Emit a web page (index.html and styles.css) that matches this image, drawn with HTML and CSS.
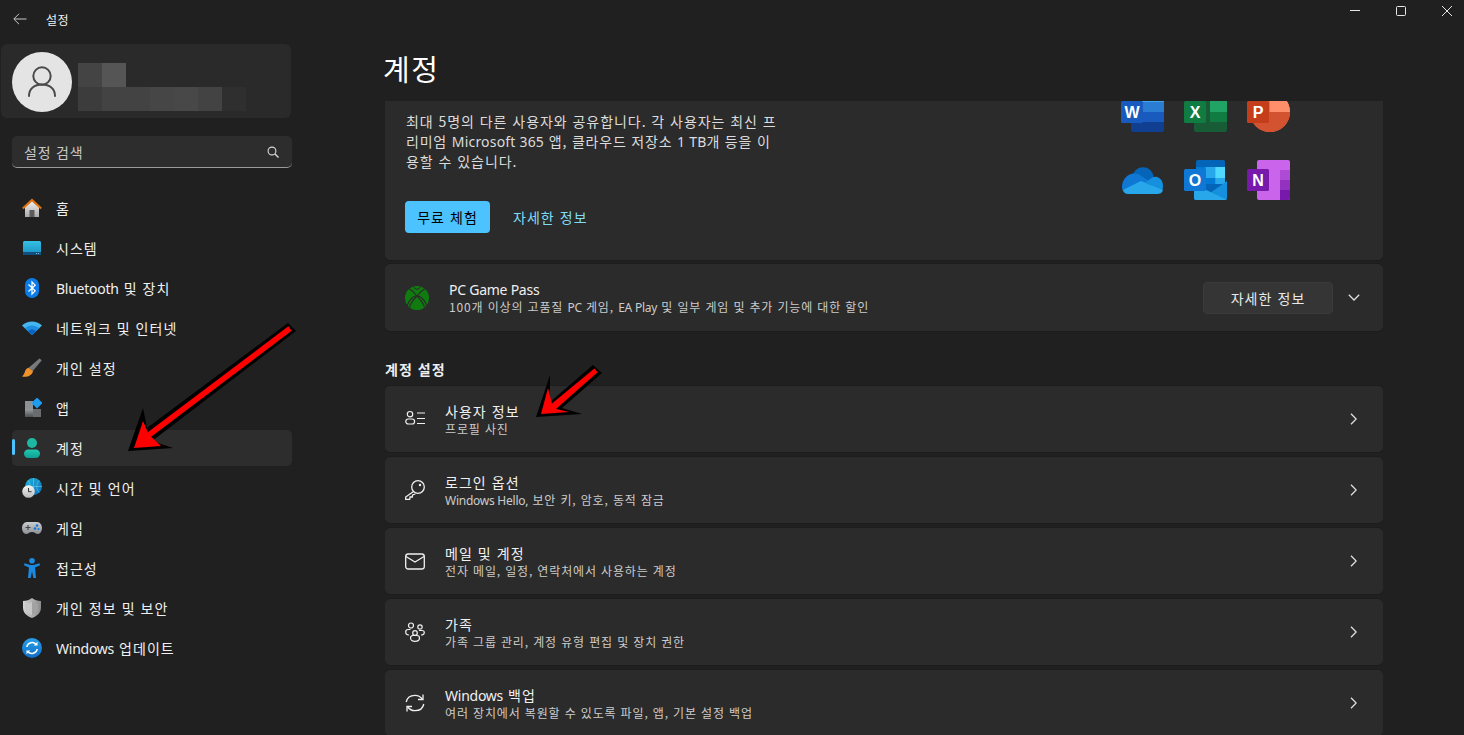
FILE: index.html
```html
<!DOCTYPE html>
<html lang="ko">
<head>
<meta charset="utf-8">
<title>설정</title>
<link rel="stylesheet" href="styles.css">
</head>
<body>
<div class="window">
  <svg width="0" height="0" class="defs">
    <defs>
      <linearGradient id="gHome" x1="0" y1="0" x2="0" y2="1"><stop offset="0" stop-color="#f2f2f2"/><stop offset="1" stop-color="#a8a8a8"/></linearGradient>
      <linearGradient id="gSys" x1="0" y1="0" x2="0" y2="1"><stop offset="0" stop-color="#35c1e4"/><stop offset="1" stop-color="#1a8fc4"/></linearGradient>
      <linearGradient id="gBrush" x1="0" y1="0" x2="1" y2="1"><stop offset="0" stop-color="#9a9a9a"/><stop offset="1" stop-color="#55585c"/></linearGradient>
      <linearGradient id="gAcc" x1="0" y1="0" x2="0" y2="1"><stop offset="0" stop-color="#1fc8b0"/><stop offset="1" stop-color="#0f9f95"/></linearGradient>
      <linearGradient id="gGlobe" x1="0" y1="0" x2="1" y2="1"><stop offset="0" stop-color="#1fb5d8"/><stop offset="1" stop-color="#0f6cbd"/></linearGradient>
      <linearGradient id="gClock" x1="0" y1="0" x2="0" y2="1"><stop offset="0" stop-color="#f5f5f5"/><stop offset="1" stop-color="#b9b9b9"/></linearGradient>
      <linearGradient id="gPad" x1="0" y1="0" x2="0" y2="1"><stop offset="0" stop-color="#c9ccd0"/><stop offset="1" stop-color="#8d9196"/></linearGradient>
      <linearGradient id="gShield" x1="0" y1="0" x2="1" y2="0"><stop offset="0" stop-color="#d5d5d5"/><stop offset="1" stop-color="#8b8b8b"/></linearGradient>
      <linearGradient id="gUpd" x1="0" y1="0" x2="0" y2="1"><stop offset="0" stop-color="#28a0e8"/><stop offset="1" stop-color="#0f6cc8"/></linearGradient>
      <linearGradient id="gStore" x1="0" y1="0" x2="0" y2="1"><stop offset="0" stop-color="#9a9ca0"/><stop offset="1" stop-color="#4e5054"/></linearGradient>
    </defs>
  </svg>

  <header class="titlebar">
    <svg class="back" width="14" height="12" viewBox="0 0 14 12"><path d="M13.500 6H1M6 .8 .8 6 6 11.200" fill="none" stroke="#c8c8c8" stroke-width="1"/></svg>
    <span class="app-title">설정</span>
    <div class="controls">
      <svg width="10" height="10" viewBox="0 0 10 10"><path d="M0 4.500h10" stroke="#e6e6e6" fill="none"/></svg>
      <svg width="10" height="10" viewBox="0 0 10 10"><rect x=".5" y=".5" width="9" height="9" rx="1" stroke="#e6e6e6" fill="none"/></svg>
      <svg width="10" height="10" viewBox="0 0 10 10"><path d="M0 0 10 10M10 0 0 10" stroke="#e6e6e6" fill="none"/></svg>
    </div>
  </header>

  <div class="layout">
    <aside class="sidebar">
      <div class="profile">
        <div class="avatar">
          <svg width="30" height="32" viewBox="0 0 30 32"><circle cx="15" cy="10" r="8.700" fill="none" stroke="#4a4a4a" stroke-width="2"/><path d="M2 30c0-7.500 5.500-11.500 13-11.500S28 22.500 28 30" fill="none" stroke="#4a4a4a" stroke-width="2" stroke-linecap="round"/></svg>
        </div>
        <div class="blur">
          <div class="blur-row"><i class="b1"></i><i class="b2"></i></div>
          <div class="blur-row"><i class="b3"></i><i class="b4"></i><i class="b4"></i><i class="b5"></i><i class="b6"></i><i class="b4"></i><i class="b7"></i></div>
        </div>
      </div>

      <div class="search">
        <span>설정 검색</span>
        <svg width="12" height="12" viewBox="0 0 12 12"><circle cx="5" cy="5" r="3.900" fill="none" stroke="#d8d8d8" stroke-width="1.100"/><path d="M8 8l3.500 3.500" stroke="#d8d8d8" stroke-width="1.400"/></svg>
      </div>

      <nav class="nav">
        <a class="nav-item">
          <svg class="nav-icon" viewBox="0 0 20 20"><path d="M3 9 10 3l7 6v10H3z" fill="url(#gHome)"/><rect x="7.500" y="12" width="5" height="7" fill="#5c5c5c"/><path d="M.8 10.500 10 2l9.200 8.500" fill="none" stroke="#e0720f" stroke-width="2.200"/></svg>
          <span class="nav-label">홈</span>
        </a>
        <a class="nav-item">
          <svg class="nav-icon" viewBox="0 0 20 20"><rect x="1" y="3" width="18" height="14" rx="1.500" fill="url(#gSys)"/><path d="M1 14h18v1.500A1.500 1.500 0 0 1 17.500 17h-15A1.500 1.500 0 0 1 1 15.500z" fill="#10507e"/><path d="M14 15.500h1M16 15.500h1" stroke="#9fd8f0" stroke-width=".8"/></svg>
          <span class="nav-label">시스템</span>
        </a>
        <a class="nav-item">
          <svg class="nav-icon" viewBox="0 0 20 20"><rect x="3" y="0" width="14" height="20" rx="7" fill="#0a7be8"/><path d="M6.500 6.500 13.200 12.800 10 16V4l3.200 3.200L6.500 13.500" fill="none" stroke="#fff" stroke-width="1.200"/></svg>
          <span class="nav-label"><span class="en">Bluetooth</span> 및 장치</span>
        </a>
        <a class="nav-item">
          <svg class="nav-icon" viewBox="0 0 20 20"><path d="M0 7.500C5.500 2 14.500 2 20 7.500L10 17z" fill="#45b6f0"/><path d="M3 10.300C7 6.500 13 6.500 17 10.300L10 17z" fill="#1d8fe0"/><path d="M6 13c2.300-2 5.700-2 8 0l-4 4z" fill="#0a62c4"/></svg>
          <span class="nav-label">네트워크 및 인터넷</span>
        </a>
        <a class="nav-item">
          <svg class="nav-icon" viewBox="0 0 20 20"><path d="M6.500 10 17.500 .5 19.800 2.300 10.500 13.500z" fill="url(#gBrush)"/><path d="M6.500 9.800C4 10.300 3.300 12.500 2.800 14S1.500 17 0 18.500c3.500.9 9.500.3 11-5.200z" fill="#f0922b"/></svg>
          <span class="nav-label">개인 설정</span>
        </a>
        <a class="nav-item">
          <svg class="nav-icon" viewBox="0 0 20 20"><rect x="3" y="3" width="8" height="8" fill="#8d9094"/><rect x="3" y="11" width="8" height="8" fill="url(#gStore)"/><rect x="11" y="11" width="8" height="8" fill="#6a6c70"/><rect x="11.100" y="1.100" width="7.800" height="7.800" transform="rotate(45 15 5)" fill="#1e9cf0"/></svg>
          <span class="nav-label">앱</span>
        </a>
        <a class="nav-item active">
          <svg class="nav-icon" viewBox="0 0 20 20"><circle cx="10" cy="5" r="5" fill="#1db8a2"/><rect x="2" y="11.500" width="16" height="8.500" rx="4.200" fill="url(#gAcc)"/></svg>
          <span class="nav-label">계정</span>
        </a>
        <a class="nav-item">
          <svg class="nav-icon" viewBox="0 0 20 20"><circle cx="11.500" cy="8.500" r="8.500" fill="url(#gGlobe)"/><path d="M3 8.500h17M11.500 0v17M6 2.500c3 4 3 8 0 12M17 2.500c-3 4-3 8 0 12" stroke="#62d0ea" stroke-width=".6" fill="none"/><circle cx="6.500" cy="13.500" r="6.300" fill="url(#gClock)"/><path d="M6.500 10v3.700h3" fill="none" stroke="#333" stroke-width="1"/></svg>
          <span class="nav-label">시간 및 언어</span>
        </a>
        <a class="nav-item">
          <svg class="nav-icon" viewBox="0 0 20 20"><path d="M5 4h10c3 0 5 3 5 6s-2 6-4 6c-2.500 0-3-2-6-2s-3.500 2-6 2c-2 0-4-3-4-6s2-6 5-6z" fill="url(#gPad)"/><path d="M3.500 9.500h5M6 7v5" stroke="#444" stroke-width="1.100"/><circle cx="15" cy="7.500" r="1.300" fill="#1273d4"/><circle cx="13" cy="10.500" r="1.300" fill="#1273d4"/><circle cx="16.500" cy="11" r="1" fill="#1273d4"/></svg>
          <span class="nav-label">게임</span>
        </a>
        <a class="nav-item">
          <svg class="nav-icon" viewBox="0 0 20 20"><circle cx="10" cy="2.800" r="2.800" fill="#1a8be0"/><path d="M2.500 5.200 2 7.200 7 9.500 6 20h2.600L10 13.500 11.400 20H14L13 9.500l5-2.300-.5-2L11.500 7h-3z" fill="#1a8be0"/></svg>
          <span class="nav-label">접근성</span>
        </a>
        <a class="nav-item">
          <svg class="nav-icon" viewBox="0 0 20 20"><path d="M10 0c2.500 2 5.500 3 9 3v6.500c0 5-3.500 8.500-9 10.500C4.500 18 1 14.500 1 9.500V3c3.500 0 6.500-1 9-3z" fill="url(#gShield)"/><path d="M10 4c1.800 1.200 3.800 1.800 6 2v4c0 3.500-2.300 5.500-6 7z" fill="#a2a2a2"/><path d="M10 4C8.200 5.200 6.200 5.800 4 6v4c0 3.500 2.300 5.500 6 7z" fill="#c8c8c8"/></svg>
          <span class="nav-label">개인 정보 및 보안</span>
        </a>
        <a class="nav-item">
          <svg class="nav-icon" viewBox="0 0 20 20"><circle cx="10" cy="10" r="10" fill="url(#gUpd)"/><path d="M4.800 9a5.300 5.300 0 0 1 9.400-2.500M15.200 11a5.300 5.300 0 0 1-9.400 2.500" fill="none" stroke="#fff" stroke-width="1.500"/><path d="M15.500 3.700v3.800h-3.800zM4.500 16.300v-3.800h3.800z" fill="#fff"/></svg>
          <span class="nav-label"><span class="en">Windows</span> 업데이트</span>
        </a>
      </nav>
    </aside>

    <main class="main">
      <h1 class="page-title">계정</h1>
      <div class="scroller">
        <section class="card promo">
          <div class="promo-text">
            <div class="promo-line">최대 5명의 다른 사용자와 공유합니다. 각 사용자는 최신 프</div>
            <div class="promo-line tight">리미엄 <span class="en">Microsoft 365</span> 앱, 클라우드 저장소 <span class="en">1 TB</span>개 등을 이</div>
            <div class="promo-line">용할 수 있습니다.</div>
            <div class="promo-actions">
              <button class="primary">무료 체험</button>
              <span class="link">자세한 정보</span>
            </div>
          </div>
          <div class="office">
            <svg viewBox="0 0 43 40"><path d="M10 2a2 2 0 0 1 2-2h29a2 2 0 0 1 2 2v8H10z" fill="#41a5ee"/><rect x="10" y="10" width="33" height="10" fill="#2b7cd3"/><rect x="10" y="20" width="33" height="10" fill="#185abd"/><path d="M10 30h33v8a2 2 0 0 1-2 2H12a2 2 0 0 1-2-2z" fill="#103f91"/><rect x="0" y="9" width="22" height="22" rx="1.500" fill="#185abd"/><text x="11" y="26" class="ol">W</text></svg>
            <svg viewBox="0 0 43 40"><path d="M10 2a2 2 0 0 1 2-2h29a2 2 0 0 1 2 2v8H10z" fill="#21a366"/><rect x="10" y="10" width="33" height="10" fill="#21a366"/><rect x="26" y="20" width="17" height="10" fill="#107c41"/><path d="M10 30h33v8a2 2 0 0 1-2 2H12a2 2 0 0 1-2-2z" fill="#185c37"/><rect x="10" y="9" width="16" height="21" fill="#185c37"/><rect x="0" y="9" width="22" height="22" rx="1.500" fill="#107c41"/><text x="11" y="26" class="ol">X</text></svg>
            <svg viewBox="0 0 43 40"><circle cx="23" cy="20" r="20" fill="#ed6c47"/><path d="M23 0a20 20 0 0 1 20 20H23z" fill="#ff8f6b"/><path d="M3 20a20 20 0 0 0 40 0z" fill="#d35230"/><rect x="0" y="9" width="22" height="22" rx="1.500" fill="#c43e1c"/><text x="11" y="26" class="ol">P</text></svg>
            <svg viewBox="0 0 43 40"><path d="M11 20C11 12 16 7.300 22 7.300S33 12 33 20l-6 2H12z" fill="#0364b8"/><path d="M1 27c0-7 5-13.500 12-13.500 3 0 6 1.200 8 3L30 22 8 34c-4.500 0-7-3-7-7z" fill="#0f78d4"/><path d="M28 20c3-3 6-3.500 8-3 3.500 1 6 4 6 9 0 2-.5 4-1.500 5.500L24 22z" fill="#1490df"/><path d="M2 30 20 21 42 30C41 33 39 34 36 34H8C5 34 3 33 2 30z" fill="#28a8ea"/></svg>
            <svg viewBox="0 0 43 40"><path d="M12 2a2 2 0 0 1 2-2h25a2 2 0 0 1 2 2v30H12z" fill="#0364b8"/><rect x="12" y="7" width="9.500" height="11" fill="#0078d4"/><rect x="21.500" y="7" width="9.700" height="11" fill="#28a8ea"/><rect x="31.200" y="7" width="9.800" height="11" fill="#50d9ff"/><rect x="21.500" y="18" width="9.700" height="6" fill="#0078d4"/><rect x="31.200" y="18" width="9.800" height="6" fill="#28a8ea"/><path d="M10 24 26 33 43 21v17a2 2 0 0 1-2 2H12a2 2 0 0 1-2-2z" fill="#1490df"/><path d="M10 24l33 16H12a2 2 0 0 1-2-2z" fill="#28a8ea"/><rect x="0" y="9" width="22" height="22" rx="1.500" fill="#0f78d4"/><text x="11" y="26" class="ol">O</text></svg>
            <svg viewBox="0 0 43 40"><rect x="10" y="0" width="33" height="40" rx="2" fill="#ca64ea"/><rect x="33" y="10" width="10" height="10" fill="#ae4bd5"/><rect x="33" y="20" width="10" height="10" fill="#9332bf"/><path d="M33 30h10v8a2 2 0 0 1-2 2h-8z" fill="#7719aa"/><rect x="0" y="9" width="22" height="22" rx="1.500" fill="#7719aa"/><text x="11" y="26" class="ol">N</text></svg>
          </div>
        </section>

        <section class="card pass">
          <svg class="xbox" viewBox="0 0 24 24"><circle cx="12" cy="12" r="12" fill="#107c10"/><path d="M4 2.500C8 5 12 10 12 10s4-5 8-7.500M2.200 19.500C4 14 9 9.500 12 10c3-.5 8 4 9.800 9.500M12 10c-2 2-6 6-7.500 11M12 10c2 2 6 6 7.500 11" fill="none" stroke="#2b2b2b" stroke-width="1.200"/><path d="M8.500 1.500 12 3.500l3.500-2" fill="none" stroke="#2b2b2b" stroke-width="1"/><path d="M12 13.500c-3 2.800-5 5.800-5.700 8.500 3.500 2.500 8 2.500 11.400 0-.7-2.700-2.700-5.700-5.700-8.500z" fill="#107c10"/></svg>
          <div class="pass-text">
            <div class="row-title"><span class="en">PC Game Pass</span></div>
            <div class="row-sub">100개 이상의 고품질 <span class="en">PC</span> 게임, <span class="en">EA Play</span> 및 일부 게임 및 추가 기능에 대한 할인</div>
          </div>
          <button class="secondary">자세한 정보</button>
          <svg class="chev-down" width="12" height="7" viewBox="0 0 12 7"><path d="M.8.8 6 6l5.200-5.200" fill="none" stroke="#e0e0e0" stroke-width="1.300"/></svg>
        </section>

        <h2 class="section">계정 설정</h2>

        <div class="rows">
          <a class="card row">
            <svg class="row-icon" viewBox="0 0 20 20"><circle cx="5" cy="5.200" r="2.700" fill="none" stroke="#f0f0f0" stroke-width="1.200"/><rect x=".8" y="10" width="8.800" height="5" rx="2.500" fill="none" stroke="#f0f0f0" stroke-width="1.200"/><path d="M12 4h8M12 9.500h8M12 14.500h8" stroke="#f0f0f0" stroke-width="1.200"/></svg>
            <div class="row-text"><div class="row-title">사용자 정보</div><div class="row-sub">프로필 사진</div></div>
            <svg class="chev" width="7" height="12" viewBox="0 0 7 12"><path d="M1 .8 6.200 6 1 11.200" fill="none" stroke="#e0e0e0" stroke-width="1.300"/></svg>
          </a>
          <a class="card row">
            <svg class="row-icon" viewBox="0 0 20 20"><circle cx="13" cy="7" r="6.300" fill="none" stroke="#f0f0f0" stroke-width="1.300"/><circle cx="15" cy="5" r="1.200" fill="#f0f0f0"/><path d="M8.500 11.500.7 17v2.300h4l.4-2.300h2.200l.3-2 2.700-1" fill="none" stroke="#f0f0f0" stroke-width="1.300"/></svg>
            <div class="row-text"><div class="row-title">로그인 옵션</div><div class="row-sub"><span class="en">Windows Hello,</span> 보안 키, 암호, 동적 잠금</div></div>
            <svg class="chev" width="7" height="12" viewBox="0 0 7 12"><path d="M1 .8 6.200 6 1 11.200" fill="none" stroke="#e0e0e0" stroke-width="1.300"/></svg>
          </a>
          <a class="card row">
            <svg class="row-icon" viewBox="0 0 20 20"><rect x=".7" y="3" width="18.600" height="15" rx="2.500" fill="none" stroke="#f0f0f0" stroke-width="1.300"/><path d="M1 5.500 10 11l9-5.500" fill="none" stroke="#f0f0f0" stroke-width="1.300"/></svg>
            <div class="row-text"><div class="row-title">메일 및 계정</div><div class="row-sub">전자 메일, 일정, 연락처에서 사용하는 계정</div></div>
            <svg class="chev" width="7" height="12" viewBox="0 0 7 12"><path d="M1 .8 6.200 6 1 11.200" fill="none" stroke="#e0e0e0" stroke-width="1.300"/></svg>
          </a>
          <a class="card row">
            <svg class="row-icon" viewBox="0 0 20 20"><circle cx="6" cy="3.500" r="2.500" fill="none" stroke="#f0f0f0" stroke-width="1.200"/><circle cx="15" cy="5" r="2.200" fill="none" stroke="#f0f0f0" stroke-width="1.200"/><circle cx="10" cy="11" r="2.300" fill="none" stroke="#f0f0f0" stroke-width="1.200"/><path d="M5.500 7.500H3C1 7.500.7 9 .7 10c0 2 1.500 3 3.300 3M14 8.500h3c1.500 0 2.300 1 2.300 2 0 1.500-1 2.500-3.300 2.500M5.500 16c0-2 1.500-2.500 2.500-2.500h4c1 0 2.500.5 2.500 2.500 0 2-2 3.300-4.500 3.300S5.500 18 5.500 16z" fill="none" stroke="#f0f0f0" stroke-width="1.200"/></svg>
            <div class="row-text"><div class="row-title">가족</div><div class="row-sub">가족 그룹 관리, 계정 유형 편집 및 장치 권한</div></div>
            <svg class="chev" width="7" height="12" viewBox="0 0 7 12"><path d="M1 .8 6.200 6 1 11.200" fill="none" stroke="#e0e0e0" stroke-width="1.300"/></svg>
          </a>
          <a class="card row">
            <svg class="row-icon" viewBox="0 0 20 20"><path d="M1.200 9C2 5 5.500 2.300 10 2.300c3 0 5.500 1.300 7.300 3.700M18.800 11c-.8 4-4.300 6.700-8.800 6.700-3 0-5.500-1.300-7.300-3.700" fill="none" stroke="#f0f0f0" stroke-width="1.300"/><path d="M18 1.500v5h-5M2 18.500v-5h5" fill="none" stroke="#f0f0f0" stroke-width="1.300"/></svg>
            <div class="row-text"><div class="row-title"><span class="en">Windows</span> 백업</div><div class="row-sub">여러 장치에서 복원할 수 있도록 파일, 앱, 기본 설정 백업</div></div>
            <svg class="chev" width="7" height="12" viewBox="0 0 7 12"><path d="M1 .8 6.200 6 1 11.200" fill="none" stroke="#e0e0e0" stroke-width="1.300"/></svg>
          </a>
        </div>
      </div>
    </main>
  </div>

  <svg class="annotations" width="1464" height="735" viewBox="0 0 1464 735">
    <polygon points="288,323 296,331 152,441 173,448 128,451 143,408 147,428" fill="#000"/>
    <polygon points="288.300,326.300 291.700,330.700 151.200,436.700 161,446 134,448 143,421 147.800,432.300" fill="#f00"/>
    <polygon points="593,365 602,373 562,408 582,414 536,417 550,375 550,402" fill="#000"/>
    <polygon points="594.400,368.400 597.600,372.200 556,409 569,412 541,414 548,388 552,403.500" fill="#f00"/>
  </svg>
</div>
</body>
</html>
```

FILE: styles.css
```css
* { box-sizing: border-box; }
html, body { margin: 0; padding: 0; height: 100%; overflow: hidden; }
body {
  background: #202020;
  color: #e8e8e8;
  font-family: "Noto Sans CJK KR", "Noto Sans", sans-serif;
  font-size: 14px;
  letter-spacing: 1.05px;
}
.en { font-family: "Noto Sans", "Noto Sans CJK KR", sans-serif; letter-spacing: -.25px; line-height: 1; }
.window { position: relative; width: 1464px; height: 735px; overflow: hidden; }
.defs { position: absolute; }

.titlebar { height: 38px; display: flex; align-items: center; padding-left: 13px; }
.back { flex: none; }
.app-title { margin-left: 19px; font-size: 12px; color: #f0f0f0; letter-spacing: .4px; }
.controls { margin-left: auto; align-self: flex-start; display: flex; gap: 36px; padding: 6px 12px 0 0; }
.controls svg { display: block; }

.layout { display: flex; height: 697px; }
.sidebar { width: 292px; flex: none; padding-top: 6px; }

.profile {
  margin-left: 1px; width: 290px; height: 74px;
  background: #2a2a2a; border-radius: 6px;
  display: flex; align-items: center; padding: 2px 0 0 11px;
}
.avatar {
  width: 60px; height: 60px; border-radius: 50%; background: #e4e4e4;
  display: flex; align-items: center; justify-content: center; flex: none;
}
.blur { margin: 10px 0 0 6px; display: flex; flex-direction: column; }
.blur-row { display: flex; height: 24px; }
.blur-row i { display: block; width: 24px; height: 24px; }
.b1 { background: #444; } .b2 { background: #555; } .b3 { background: #3c3c3c; }
.b4 { background: #434343; } .b5 { background: #464646; } .b6 { background: #484848; }
.b7 { background: #2f2f2f; }

.search {
  margin: 18px 0 0 12px; width: 280px; height: 32px;
  background: #2d2d2d; border-radius: 5px; border-bottom: 1px solid #9a9a9a;
  display: flex; align-items: center; justify-content: space-between;
  padding: 0 13px 0 12px; color: #c8c8c8; font-size: 14px; letter-spacing: .8px;
}

.nav { margin: 22px 0 0 12px; width: 280px; display: flex; flex-direction: column; gap: 4px; }
.nav-item {
  height: 36px; border-radius: 5px; display: flex; align-items: center;
  padding-left: 10px; gap: 14px; position: relative; color: #f0f0f0;
}
.nav-label { padding-bottom: 1px; padding-top: 1px; }
.nav-icon { width: 20px; height: 20px; flex: none; }
.nav-item.active { background: #2d2d2d; }
.nav-item.active::before {
  content: ""; position: absolute; left: 0; top: 9px; width: 3px; height: 16px;
  background: #4cc2ff; border-radius: 2px;
}

.main { margin-left: 93px; width: 998px; flex: none; display: flex; flex-direction: column; height: 697px; }
.page-title { margin: 0 0 0 -2px; height: 63px; font-size: 29px; font-weight: 400; line-height: 60px; color: #fff; letter-spacing: 1.5px; }
.scroller { flex: 1; overflow: hidden; }

.card { background: #2b2b2b; box-shadow: 0 0 0 1px #1d1d1d; border-radius: 5px; display: flex; }
.promo { height: 159px; padding-left: 20px; border-radius: 0 0 5px 5px; justify-content: space-between; overflow: hidden; }
.promo-text { width: 400px; padding-top: 10px; }
.promo-line { margin-left: 1px; line-height: 20px; color: #dcdcdc; letter-spacing: .95px; white-space: nowrap; }
.promo-line.tight { letter-spacing: .8px; }
.promo-line .en { letter-spacing: .2px; }
.promo-actions { display: flex; align-items: center; margin-top: 30px; gap: 23px; }
.primary {
  width: 85px; height: 32px; border: 0; border-radius: 4px; background: #4cc2ff;
  color: #000; font: inherit; letter-spacing: inherit; padding: 0;
}
.link { color: #7fdcf8; }
.office {
  display: grid; grid-template-columns: repeat(3, 43px); grid-auto-rows: 40px;
  column-gap: 20px; row-gap: 28px; margin: -9px 93px 0 0; height: 108px;
}
.office svg { display: block; width: 43px; height: 40px; }
.ol { font: bold 16px "Liberation Sans", sans-serif; fill: #fff; text-anchor: middle; letter-spacing: 0; }

.pass { margin-top: 4px; height: 67px; align-items: center; padding-left: 20px; }
.xbox { width: 24px; height: 24px; flex: none; }
.pass-text { margin-left: 20px; flex: 1; padding-top: 1px; }
.row-title { font-size: 14px; line-height: 16px; margin-bottom: 2px; color: #f0f0f0; }
.row-sub { font-size: 12px; line-height: 16px; color: #cccccc; letter-spacing: .85px; }
.secondary {
  width: 130px; height: 32px; background: #353535; border: 1px solid #3a3a3a; border-radius: 4px;
  color: #e8e8e8; font: inherit; letter-spacing: inherit; padding: 0; margin-right: 15px;
}
.chev-down { margin-right: 23px; flex: none; }

.section { margin: 0; height: 55px; padding-top: 28px; font-size: 14px; font-weight: 700; line-height: 20px; color: #eee; }

.rows { display: flex; flex-direction: column; gap: 5px; }
.row { height: 66px; align-items: center; padding-left: 20px; flex: none; }
.row-icon { width: 20px; height: 20px; flex: none; }
.row-text { margin-left: 20px; flex: 1; padding-top: 1px; }
.chev { margin-right: 26px; flex: none; }

.annotations { position: absolute; left: 0; top: 0; pointer-events: none; }
```
